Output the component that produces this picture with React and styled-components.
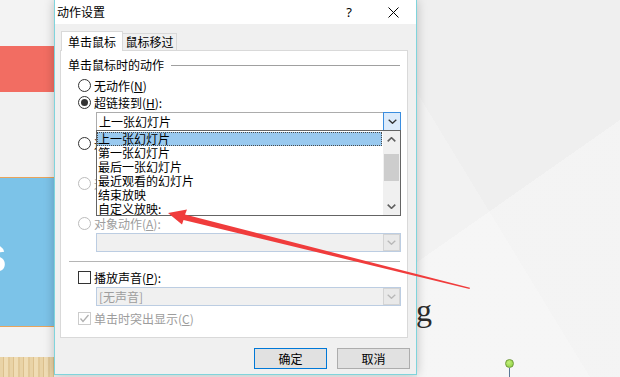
import React from 'react';
import styled, { createGlobalStyle } from 'styled-components';

const CJK = `"Noto Sans CJK SC", "Noto Sans", sans-serif`;

const GlobalStyle = createGlobalStyle`
  html, body { margin: 0; padding: 0; }
  body {
    width: 620px; height: 377px; overflow: hidden;
    background: #efefef;
    font-family: ${CJK};
  }
  #root { width: 620px; height: 377px; }
`;

const Stage = styled.div`
  position: relative;
  width: 620px;
  height: 377px;
  display: flex;
  align-items: flex-start;
  overflow: hidden;
`;

/* ---------- slide behind the dialog ---------- */
const LeftStrip = styled.div`
  width: 54px;
  height: 377px;
  flex: none;
  display: flex;
  flex-direction: column;
  overflow: hidden;
`;

const Band = styled.div`
  flex: none;
  box-sizing: border-box;
  height: ${p => p.$h}px;
  background: ${p => p.$bg};
  border-top: ${p => (p.$edge ? `1px solid ${p.$edge}` : 'none')};
  border-bottom: ${p => (p.$edge ? `1px solid ${p.$edge}` : 'none')};
  overflow: hidden;
`;

const WoodBand = styled(Band)`
  background: repeating-linear-gradient(
    90deg,
    #e9d3a6 0 3px,
    #dcc08d 3px 4px,
    #efdcb4 4px 8px,
    #e2c999 8px 10px
  );
`;

const BigLetter = styled.div`
  margin: 50px 0 0 -22px;
  font-family: "Liberation Sans", Arial, sans-serif;
  font-weight: 700;
  font-size: 52px;
  line-height: 52px;
  color: #ffffff;
`;

const RightArea = styled.div`
  flex: 1;
  height: 377px;
  display: flex;
  flex-direction: column;
  background-color: #efefef;
  background-image:
    linear-gradient(145deg, transparent 50.5%, rgba(255, 255, 255, 0.3) 50.5%),
    linear-gradient(58.7deg, rgba(255, 255, 255, 0.2) 40%, transparent 40%);
`;

const RedRule = styled.div`
  margin-top: 90px;
  height: 1px;
  background: #f27a6c;
`;

const SerifG = styled.div`
  margin: 204px 0 0 -1px;
  font-family: "Liberation Serif", "Times New Roman", serif;
  font-size: 32px;
  line-height: 32px;
  color: #2b2b2b;
`;

const Pin = styled.div`
  margin: 33px 0 0 88px;
  width: 9px;
  display: flex;
  flex-direction: column;
  align-items: center;
`;

const PinHead = styled.div`
  width: 9px;
  height: 9px;
  box-sizing: border-box;
  border-radius: 50%;
  border: 1px solid #6f9a3a;
  background: radial-gradient(circle at 40% 35%, #c4f07a, #86cc3c);
`;

const PinStem = styled.div`
  width: 1px;
  height: 10px;
  background: #5b7896;
`;

/* ---------- dialog ---------- */
const Dialog = styled.div`
  position: relative;
  z-index: 1;
  width: 363px;
  height: 375px;
  flex: none;
  box-sizing: border-box;
  border: 1px solid #7fd4dc;
  border-top: none;
  background: #f0f0f0;
  display: flex;
  flex-direction: column;
  box-shadow: 0 0 10px rgba(0, 0, 0, 0.22);
  font-family: ${CJK};
  font-size: 12px;
  color: #000;
`;

const TitleBar = styled.div`
  height: 24px;
  flex: none;
  background: #ffffff;
  display: flex;
  align-items: center;
  padding-left: 2px;
`;

const Title = styled.div`
  font-size: 12px;
  line-height: 14px;
  flex: 1;
`;

const CaptionBtn = styled.div`
  width: ${p => p.$w}px;
  height: 24px;
  margin-right: ${p => p.$mr || 0}px;
  display: flex;
  align-items: center;
  justify-content: center;
  font-family: "Noto Sans", sans-serif;
  font-size: 13px;
`;

const Body = styled.div`
  flex: 1;
  display: flex;
  flex-direction: column;
  padding: 7px 0 0 5px;
`;

const TabStrip = styled.div`
  display: flex;
  align-items: flex-end;
  height: 20px;
  padding-left: 1px;
  margin-bottom: -1px;
  position: relative;
  z-index: 2;
`;

const Tab = styled.div`
  box-sizing: border-box;
  width: ${p => p.$w}px;
  height: ${p => (p.$active ? 20 : 17)}px;
  margin-bottom: ${p => (p.$active ? 0 : 1)}px;
  border: 1px solid #d9d9d9;
  border-bottom: none;
  border-left: ${p => (p.$active ? '1px solid #d9d9d9' : 'none')};
  background: ${p => (p.$active ? '#ffffff' : '#f0f0f0')};
  display: flex;
  align-items: center;
  justify-content: center;
  font-size: 12px;
  line-height: 14px;
  padding-top: ${p => (p.$active ? 1 : 0)}px;
`;

const Panel = styled.div`
  position: relative;
  width: 348px;
  height: 288px;
  box-sizing: border-box;
  border: 1px solid #d9d9d9;
  background: #ffffff;
  padding: 0 6px 0 7px;
  display: flex;
  flex-direction: column;
`;

const GroupHeader = styled.div`
  margin-top: 7px;
  height: 14px;
  display: flex;
  align-items: center;
`;

const GroupTitle = styled.div`
  font-size: 12px;
  line-height: 14px;
  white-space: nowrap;
`;

const GroupLine = styled.div`
  flex: 1;
  height: 1px;
  margin: 0 1px 0 7px;
  background: #a0a0a0;
  box-shadow: 0 1px 0 #ffffff;
`;

const OptionRow = styled.div`
  margin-top: ${p => p.$mt || 0}px;
  height: 17px;
  padding-left: 10px;
  display: flex;
  align-items: center;
  gap: 3px;
`;

const Radio = styled.div`
  width: 13px;
  height: 13px;
  flex: none;
  box-sizing: border-box;
  border-radius: 50%;
  border: 1px solid ${p => (p.$disabled ? '#bcbcbc' : '#333333')};
  background: #ffffff;
  display: flex;
  align-items: center;
  justify-content: center;
  &::after {
    content: '';
    display: ${p => (p.$checked ? 'block' : 'none')};
    width: 7px;
    height: 7px;
    border-radius: 50%;
    background: #333333;
  }
`;

const Check = styled.div`
  width: 13px;
  height: 13px;
  flex: none;
  box-sizing: border-box;
  border: 1px solid ${p => (p.$disabled ? '#cccccc' : '#333333')};
  background: #ffffff;
  display: flex;
  align-items: center;
  justify-content: center;
`;

const Label = styled.span`
  font-size: 12px;
  line-height: 17px;
  white-space: nowrap;
  color: ${p => (p.$disabled ? '#9d9d9d' : '#000000')};
  u { text-decoration-thickness: 1px; text-underline-offset: 1px; }
`;

const Combo = styled.div`
  position: relative;
  margin: ${p => p.$mt || 0}px 0 0 28px;
  height: 19px;
  box-sizing: border-box;
  border: 1px solid ${p => (p.$disabled ? '#bccde2' : '#acacac')};
  background: ${p => (p.$disabled ? '#f0f0f0' : '#ffffff')};
  display: flex;
`;

const ComboText = styled.div`
  flex: 1;
  padding-left: 2px;
  font-size: 12px;
  line-height: 17px;
  white-space: nowrap;
  color: ${p => (p.$disabled ? '#9d9d9d' : '#000000')};
`;

const DropBtn = styled.div`
  width: ${p => (p.$active ? 18 : 17)}px;
  box-sizing: border-box;
  margin: ${p => (p.$active ? '-1px -1px -1px 0' : '0')};
  border: 1px solid ${p => (p.$active ? '#3a8ddf' : '#d4d4d4')};
  background: ${p => (p.$active ? '#dcebfb' : '#e9e9e9')};
  display: flex;
  align-items: center;
  justify-content: center;
`;

const ListPopup = styled.div`
  position: absolute;
  z-index: 5;
  top: 100%;
  left: -1px;
  right: -1px;
  height: 86px;
  box-sizing: border-box;
  border: 1px solid #646464;
  background: #ffffff;
  display: flex;
`;

const ListItems = styled.div`
  flex: 1;
  padding: 1px 1px 0 0;
  overflow: hidden;
`;

const ListItem = styled.div`
  height: 14px;
  box-sizing: border-box;
  padding-left: ${p => (p.$selected ? 0 : 1)}px;
  font-size: 12px;
  white-space: nowrap;
  background: ${p => (p.$selected ? '#99c9ef' : 'transparent')};
  border: ${p => (p.$selected ? '1px dotted #4a4a4a' : 'none')};
  line-height: ${p => (p.$selected ? 12 : 14)}px;
`;

const ScrollBar = styled.div`
  width: 17px;
  flex: none;
  background: #f0f0f0;
  display: flex;
  flex-direction: column;
`;

const ScrollBtn = styled.div`
  height: 17px;
  flex: none;
  display: flex;
  align-items: center;
  justify-content: center;
`;

const ScrollTrack = styled.div`
  flex: 1;
  padding: 6px 1px 0;
`;

const ScrollThumb = styled.div`
  height: 27px;
  background: #cdcdcd;
`;

const Separator = styled.div`
  margin: 9px 1px 0 1px;
  height: 1px;
  background: #b5b5b5;
`;

const ButtonRow = styled.div`
  margin-top: 10px;
  width: 350px;
  display: flex;
  justify-content: flex-end;
  gap: 10px;
`;

const PushButton = styled.div`
  width: 73px;
  height: 21px;
  box-sizing: border-box;
  border: 1px solid ${p => (p.$default ? '#0078d7' : '#adadad')};
  background: #e1e1e1;
  display: flex;
  align-items: center;
  justify-content: center;
  font-size: 12px;
  line-height: 14px;
`;

const ArrowLayer = styled.svg`
  position: absolute;
  inset: 0;
  z-index: 10;
  pointer-events: none;
`;

const Chevron = ({ up, color = '#333', w = 9, h = 5, sw = 1.3 }) => (
  <svg width={w} height={h} viewBox={`0 0 ${w} ${h}`}>
    <polyline
      points={
        up
          ? `0.7,${h - 0.7} ${w / 2},0.7 ${w - 0.7},${h - 0.7}`
          : `0.7,0.7 ${w / 2},${h - 0.7} ${w - 0.7},0.7`
      }
      fill="none"
      stroke={color}
      strokeWidth={sw}
    />
  </svg>
);

const listItems = ['上一张幻灯片', '第一张幻灯片', '最后一张幻灯片', '最近观看的幻灯片', '结束放映', '自定义放映:'];

export default function App() {
  return (
    <>
      <GlobalStyle />
      <Stage>
        <LeftStrip>
          <Band $h={46} $bg="#f3f3f3" />
          <Band $h={46} $bg="#f26d62" />
          <Band $h={85} $bg="#f1f1f1" />
          <Band $h={150} $bg="#7cc3e8" $edge="#e8a45c">
            <BigLetter>s</BigLetter>
          </Band>
          <Band $h={30} $bg="#f3f3f3" />
          <WoodBand $h={20} />
        </LeftStrip>

        <Dialog>
          <TitleBar>
            <Title>动作设置</Title>
            <CaptionBtn $w={30} $mr={6}>?</CaptionBtn>
            <CaptionBtn $w={46}>
              <svg width="11" height="11" viewBox="0 0 11 11">
                <path d="M0.5 0.5 L10.5 10.5 M10.5 0.5 L0.5 10.5" stroke="#000" strokeWidth="1" />
              </svg>
            </CaptionBtn>
          </TitleBar>

          <Body>
            <TabStrip>
              <Tab $active $w={62}>单击鼠标</Tab>
              <Tab $w={54}>鼠标移过</Tab>
            </TabStrip>

            <Panel>
              <GroupHeader>
                <GroupTitle>单击鼠标时的动作</GroupTitle>
                <GroupLine />
              </GroupHeader>

              <OptionRow $mt={5}>
                <Radio />
                <Label>无动作(<u>N</u>)</Label>
              </OptionRow>
              <OptionRow>
                <Radio $checked />
                <Label>超链接到(<u>H</u>):</Label>
              </OptionRow>
              <Combo $mt={1}>
                <ComboText>上一张幻灯片</ComboText>
                <DropBtn $active>
                  <Chevron />
                </DropBtn>
                <ListPopup>
                  <ListItems>
                    {listItems.map((t, i) => (
                      <ListItem key={t} $selected={i === 0}>{t}</ListItem>
                    ))}
                  </ListItems>
                  <ScrollBar>
                    <ScrollBtn>
                      <Chevron up color="#606060" sw={1.6} />
                    </ScrollBtn>
                    <ScrollTrack>
                      <ScrollThumb />
                    </ScrollTrack>
                    <ScrollBtn>
                      <Chevron color="#606060" sw={1.6} />
                    </ScrollBtn>
                  </ScrollBar>
                </ListPopup>
              </Combo>

              <OptionRow $mt={4}>
                <Radio />
                <Label>运行程序(<u>R</u>):</Label>
              </OptionRow>
              <Combo $mt={1}>
                <ComboText />
              </Combo>

              <OptionRow $mt={3}>
                <Radio $disabled />
                <Label $disabled>运行宏(<u>M</u>):</Label>
              </OptionRow>
              <Combo $mt={1} $disabled>
                <ComboText $disabled />
              </Combo>

              <OptionRow $mt={3}>
                <Radio $disabled />
                <Label $disabled>对象动作(<u>A</u>):</Label>
              </OptionRow>
              <Combo $mt={1} $disabled>
                <ComboText $disabled />
                <DropBtn>
                  <Chevron color="#b8b8b8" />
                </DropBtn>
              </Combo>

              <Separator />

              <OptionRow $mt={7}>
                <Check />
                <Label>播放声音(<u>P</u>):</Label>
              </OptionRow>
              <Combo $mt={1} $disabled>
                <ComboText $disabled>[无声音]</ComboText>
                <DropBtn>
                  <Chevron color="#b8b8b8" />
                </DropBtn>
              </Combo>

              <OptionRow $mt={4}>
                <Check $disabled>
                  <svg width="11" height="11" viewBox="0 0 11 11">
                    <polyline points="1.5,5.5 4,8.5 9.5,2" fill="none" stroke="#b0b0b0" strokeWidth="1.3" />
                  </svg>
                </Check>
                <Label $disabled>单击时突出显示(<u>C</u>)</Label>
              </OptionRow>
            </Panel>

            <ButtonRow>
              <PushButton $default>确定</PushButton>
              <PushButton>取消</PushButton>
            </ButtonRow>
          </Body>
        </Dialog>

        <RightArea>
          <RedRule />
          <SerifG>g</SerifG>
          <Pin>
            <PinHead />
            <PinStem />
          </Pin>
        </RightArea>

        <ArrowLayer width="620" height="377" viewBox="0 0 620 377">
          <polygon
            points="168,213 187,209.5 185,214.5 470,287.8 469.5,289 183.5,220 182,224.5"
            fill="#f03c3c"
          />
        </ArrowLayer>
      </Stage>
    </>
  );
}
